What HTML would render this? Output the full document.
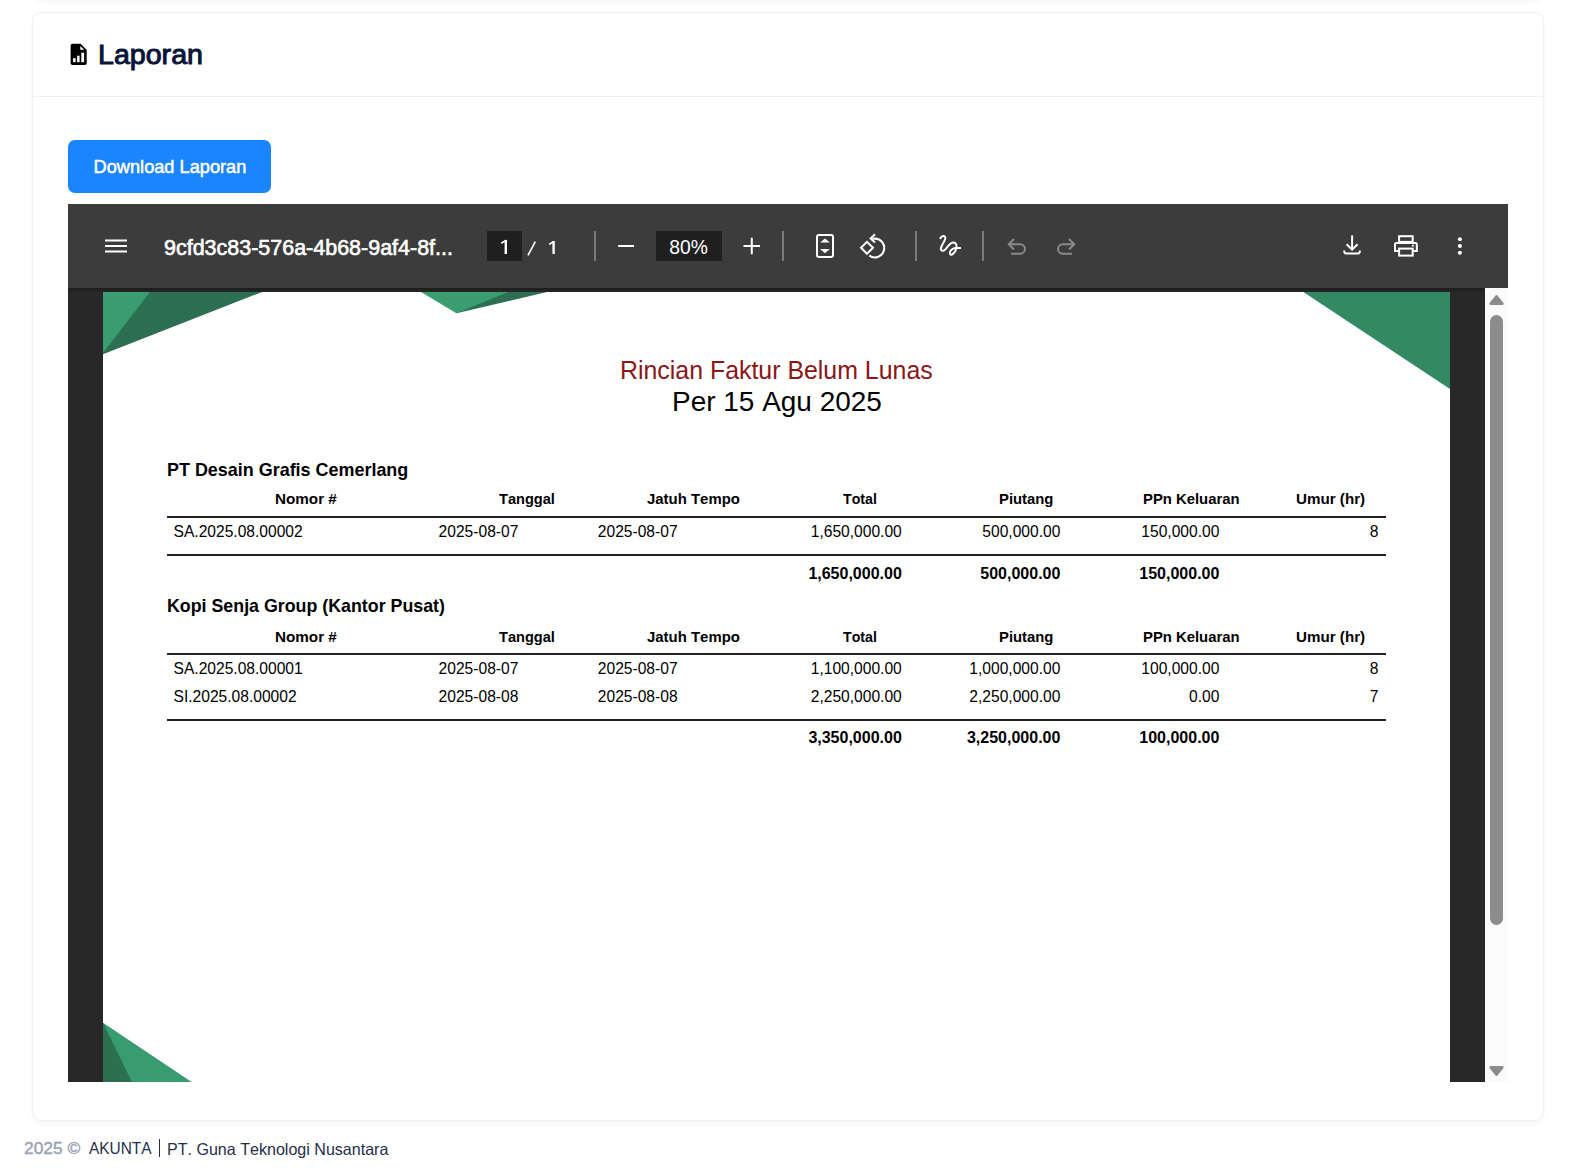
<!DOCTYPE html>
<html><head><meta charset="utf-8"><title>Laporan</title>
<style>
html,body{margin:0;padding:0;width:1589px;height:1175px;overflow:hidden;background:#ffffff;font-family:"Liberation Sans",sans-serif;position:relative}
.t{position:absolute;white-space:pre;line-height:1;font-kerning:none;font-family:"Liberation Sans",sans-serif}
</style></head><body>
<div style="position:absolute;left:34px;top:-60px;width:1508px;height:60px;background:#fff;box-shadow:0 3px 4px rgba(0,0,0,0.03);border-radius:9px"></div>
<div style="position:absolute;left:32px;top:12px;width:1510px;height:1107px;background:#fff;border:1px solid #F1F1F4;border-radius:9px;box-shadow:0 3px 4px rgba(0,0,0,0.03)"></div>
<div style="position:absolute;left:33px;top:96px;width:1510px;height:1px;background:#F1F1F4"></div>
<div class="t" style="left:97.60px;top:40.39px;font-size:28.2px;color:#071437;transform:scaleX(1.0145731658985655);transform-origin:0 0;-webkit-text-stroke:1.0px #071437;">Laporan</div>
<div style="position:absolute;left:68px;top:140px;width:203px;height:53px;background:#1B84FF;border-radius:7px"></div>
<div class="t" style="left:93.60px;top:157.89px;font-size:18.2px;color:#fff;-webkit-text-stroke:0.5px #fff;">Download Laporan</div>
<div style="position:absolute;left:68px;top:204px;width:1440px;height:878px;background:#282828"></div>
<div style="position:absolute;left:1485px;top:288px;width:23px;height:794px;background:#fbfbfb"></div>
<div style="position:absolute;left:103px;top:292px;width:1347px;height:790px;background:#fff"></div>
<div style="position:absolute;left:68px;top:204px;width:1440px;height:84px;background:#3c3c3c"></div>
<div style="position:absolute;left:68px;top:288px;width:1417px;height:4px;background:linear-gradient(#1c1c1c,#262626)"></div>
<div style="position:absolute;left:1490px;top:315px;width:13px;height:610px;background:#8c8c8c;border-radius:6.5px"></div>
<div style="position:absolute;left:487px;top:231px;width:35px;height:30px;background:#1f1f1f"></div>
<div style="position:absolute;left:656px;top:231px;width:66px;height:30px;background:#1f1f1f"></div>
<div style="position:absolute;left:594px;top:231px;width:2px;height:30px;background:#7a7a7a"></div>
<div style="position:absolute;left:782px;top:231px;width:2px;height:30px;background:#7a7a7a"></div>
<div style="position:absolute;left:915px;top:231px;width:2px;height:30px;background:#7a7a7a"></div>
<div style="position:absolute;left:982px;top:231px;width:2px;height:30px;background:#7a7a7a"></div>
<div class="t" style="left:164.10px;top:236.69px;font-size:22.3px;color:#fff;transform:scaleX(0.963283319111524);transform-origin:0 0;-webkit-text-stroke:0.65px #fff;">9cfd3c83-576a-4b68-9af4-8f...</div>
<div class="t" style="left:669.19px;top:238.48px;font-size:19.3px;color:#fff;">80%</div>
<div class="t" style="left:619.80px;top:358.03px;font-size:24.9px;color:#8a1616;transform:scaleX(1.000057760389299);transform-origin:0 0;">Rincian Faktur Belum Lunas</div>
<div class="t" style="left:671.55px;top:387.84px;font-size:27.9px;color:#000;transform:scaleX(1.0023232670861792);transform-origin:0 0;">Per 15 Agu 2025</div>
<div class="t" style="left:167.40px;top:461.94px;font-size:17.9px;font-weight:700;color:#000;transform:scaleX(1.0027373165859967);transform-origin:0 0;">PT Desain Grafis Cemerlang</div>
<div class="t" style="left:167.00px;top:598.43px;font-size:17.8px;font-weight:700;color:#000;transform:scaleX(1.0011143531568243);transform-origin:0 0;">Kopi Senja Group (Kantor Pusat)</div>
<div class="t" style="left:274.60px;top:491.24px;font-size:15.5px;font-weight:700;color:#000;transform:scaleX(0.982975104556204);transform-origin:0 0;">Nomor #</div>
<div class="t" style="left:499.30px;top:491.24px;font-size:15.5px;font-weight:700;color:#000;transform:scaleX(0.9407735197077832);transform-origin:0 0;">Tanggal</div>
<div class="t" style="left:646.50px;top:491.24px;font-size:15.5px;font-weight:700;color:#000;transform:scaleX(0.9631816617054453);transform-origin:0 0;">Jatuh Tempo</div>
<div class="t" style="left:842.90px;top:491.24px;font-size:15.5px;font-weight:700;color:#000;transform:scaleX(0.9156120591881413);transform-origin:0 0;">Total</div>
<div class="t" style="left:998.60px;top:491.24px;font-size:15.5px;font-weight:700;color:#000;transform:scaleX(0.9572272412889479);transform-origin:0 0;">Piutang</div>
<div class="t" style="left:1143.10px;top:491.24px;font-size:15.5px;font-weight:700;color:#000;transform:scaleX(0.9575286582234324);transform-origin:0 0;">PPn Keluaran</div>
<div class="t" style="left:1295.60px;top:491.24px;font-size:15.5px;font-weight:700;color:#000;transform:scaleX(0.9786811157714929);transform-origin:0 0;">Umur (hr)</div>
<div class="t" style="left:274.60px;top:628.53px;font-size:15.5px;font-weight:700;color:#000;transform:scaleX(0.982975104556204);transform-origin:0 0;">Nomor #</div>
<div class="t" style="left:499.30px;top:628.53px;font-size:15.5px;font-weight:700;color:#000;transform:scaleX(0.9407735197077832);transform-origin:0 0;">Tanggal</div>
<div class="t" style="left:646.50px;top:628.53px;font-size:15.5px;font-weight:700;color:#000;transform:scaleX(0.9631816617054453);transform-origin:0 0;">Jatuh Tempo</div>
<div class="t" style="left:842.90px;top:628.53px;font-size:15.5px;font-weight:700;color:#000;transform:scaleX(0.9156120591881413);transform-origin:0 0;">Total</div>
<div class="t" style="left:998.60px;top:628.53px;font-size:15.5px;font-weight:700;color:#000;transform:scaleX(0.9572272412889479);transform-origin:0 0;">Piutang</div>
<div class="t" style="left:1143.10px;top:628.53px;font-size:15.5px;font-weight:700;color:#000;transform:scaleX(0.9575286582234324);transform-origin:0 0;">PPn Keluaran</div>
<div class="t" style="left:1295.60px;top:628.53px;font-size:15.5px;font-weight:700;color:#000;transform:scaleX(0.9786811157714929);transform-origin:0 0;">Umur (hr)</div>
<div style="position:absolute;left:167px;top:516px;width:1219px;height:2px;background:#222"></div>
<div style="position:absolute;left:167px;top:554px;width:1219px;height:2px;background:#222"></div>
<div style="position:absolute;left:167px;top:653px;width:1219px;height:2px;background:#222"></div>
<div style="position:absolute;left:167px;top:719px;width:1219px;height:2px;background:#222"></div>
<div class="t" style="left:173.50px;top:524.05px;font-size:15.6px;color:#000;">SA.2025.08.00002</div>
<div class="t" style="left:438.60px;top:524.05px;font-size:15.6px;color:#000;">2025-08-07</div>
<div class="t" style="left:597.80px;top:524.05px;font-size:15.6px;color:#000;">2025-08-07</div>
<div class="t" style="left:810.71px;top:524.05px;font-size:15.6px;color:#000;">1,650,000.00</div>
<div class="t" style="left:982.32px;top:524.05px;font-size:15.6px;color:#000;">500,000.00</div>
<div class="t" style="left:1141.32px;top:524.05px;font-size:15.6px;color:#000;">150,000.00</div>
<div class="t" style="left:1369.82px;top:524.05px;font-size:15.6px;color:#000;">8</div>
<div class="t" style="left:808.38px;top:565.62px;font-size:16.0px;font-weight:700;color:#000;">1,650,000.00</div>
<div class="t" style="left:980.32px;top:565.62px;font-size:16.0px;font-weight:700;color:#000;">500,000.00</div>
<div class="t" style="left:1139.32px;top:565.62px;font-size:16.0px;font-weight:700;color:#000;">150,000.00</div>
<div class="t" style="left:173.50px;top:661.45px;font-size:15.6px;color:#000;">SA.2025.08.00001</div>
<div class="t" style="left:438.60px;top:661.45px;font-size:15.6px;color:#000;">2025-08-07</div>
<div class="t" style="left:597.80px;top:661.45px;font-size:15.6px;color:#000;">2025-08-07</div>
<div class="t" style="left:810.71px;top:661.45px;font-size:15.6px;color:#000;">1,100,000.00</div>
<div class="t" style="left:969.31px;top:661.45px;font-size:15.6px;color:#000;">1,000,000.00</div>
<div class="t" style="left:1141.32px;top:661.45px;font-size:15.6px;color:#000;">100,000.00</div>
<div class="t" style="left:1369.82px;top:661.45px;font-size:15.6px;color:#000;">8</div>
<div class="t" style="left:173.50px;top:689.15px;font-size:15.6px;color:#000;">SI.2025.08.00002</div>
<div class="t" style="left:438.60px;top:689.15px;font-size:15.6px;color:#000;">2025-08-08</div>
<div class="t" style="left:597.80px;top:689.15px;font-size:15.6px;color:#000;">2025-08-08</div>
<div class="t" style="left:810.71px;top:689.15px;font-size:15.6px;color:#000;">2,250,000.00</div>
<div class="t" style="left:969.31px;top:689.15px;font-size:15.6px;color:#000;">2,250,000.00</div>
<div class="t" style="left:1189.04px;top:689.15px;font-size:15.6px;color:#000;">0.00</div>
<div class="t" style="left:1369.82px;top:689.15px;font-size:15.6px;color:#000;">7</div>
<div class="t" style="left:808.38px;top:729.52px;font-size:16.0px;font-weight:700;color:#000;">3,350,000.00</div>
<div class="t" style="left:966.98px;top:729.52px;font-size:16.0px;font-weight:700;color:#000;">3,250,000.00</div>
<div class="t" style="left:1139.32px;top:729.52px;font-size:16.0px;font-weight:700;color:#000;">100,000.00</div>
<div class="t" style="left:23.60px;top:1140.21px;font-size:16.5px;color:#99A1B7;transform:scaleX(1.0514941394651978);transform-origin:0 0;-webkit-text-stroke:0.4px #99A1B7;">2025 ©</div>
<div class="t" style="left:89.00px;top:1140.45px;font-size:16.2px;color:#252F4A;transform:scaleX(0.9526756402082432);transform-origin:0 0;">AKUNTA</div>
<div style="position:absolute;left:159px;top:1139px;width:1px;height:18px;background:#252F4A"></div>
<div class="t" style="left:167.30px;top:1140.56px;font-size:16.07px;color:#252F4A;transform:scaleX(0.9998760382239575);transform-origin:0 0;">PT. Guna Teknologi Nusantara</div>
<svg width="1589" height="1175" viewBox="0 0 1589 1175" style="position:absolute;left:0;top:0">
<g>
<polygon points="103,292 262,292 103,354.2" fill="#2c6f51"/>
<polygon points="103,292 150,292 103,353" fill="#399d70"/>
<polygon points="440,292 547,292 456.4,313.2" fill="#2c6f51"/>
<polygon points="421,292 508.3,292 456.4,313.2" fill="#399d70"/>
<polygon points="1303.3,292 1450,292 1450,389" fill="#338a62"/>
<polygon points="103,1022.8 191.7,1082 103,1082" fill="#399c6f"/>
<polygon points="103,1023 132,1082 103,1082" fill="#2d7050"/>
</g>
<!-- scroll arrows -->
<polygon points="1496.5,296.6 1502.2,303.6 1490.8,303.6" fill="#8c8c8c" stroke="#8c8c8c" stroke-width="3" stroke-linejoin="round"/>
<polygon points="1490.8,1067.4 1502.2,1067.4 1496.5,1074.4" fill="#8c8c8c" stroke="#8c8c8c" stroke-width="3" stroke-linejoin="round"/>
<!-- hamburger -->
<g fill="#fff"><rect x="105" y="239.5" width="22" height="2"/><rect x="105" y="245" width="22" height="2"/><rect x="105" y="250.5" width="22" height="2"/></g>
<!-- page num -->
<g fill="none" stroke="#fff">
<path d="M505.8,239.9 V254" stroke-width="2.4"/><path d="M501.2,243.3 L505.6,240.6" stroke-width="1.7"/>
<path d="M528,255.4 L535.3,241.6" stroke-width="1.6"/>
<path d="M553.6,241 V254" stroke-width="2.4"/><path d="M549.2,244.4 L553.4,241.8" stroke-width="1.7"/>
</g>
<!-- minus / plus -->
<rect x="618.2" y="245" width="15.8" height="2" fill="#fff"/>
<rect x="743.5" y="245" width="16.5" height="2" fill="#fff"/><rect x="750.75" y="237.75" width="2" height="16.5" fill="#fff"/>
<!-- fit page -->
<rect x="817" y="235" width="16" height="22" rx="2" fill="none" stroke="#fff" stroke-width="2"/>
<polygon points="825,238.5 829.8,242.6 820.2,242.6" fill="#fff"/>
<polygon points="820.2,249 829.8,249 825,253.3" fill="#fff"/>
<!-- rotate -->
<polygon points="861,247.8 867,241.8 873,247.8 867,253.8" fill="none" stroke="#fff" stroke-width="2"/>
<path d="M872.5,238.6 L874.3,238.6 A9.4,9.4 0 1 1 869.3,255.6" fill="none" stroke="#fff" stroke-width="2.1"/>
<path d="M875,234.2 L870.6,238.5 L875,242.6" fill="none" stroke="#fff" stroke-width="2"/>
<!-- annotate -->
<path d="M940.4,238.2 C941.5,236 944.6,235 945.3,237.6 C946,240.2 941.2,245 940.9,248.4 C940.7,251.6 943.6,251.6 946.1,248.6 L948,246.2 C950.2,243.5 953.3,241.6 955.3,243.1 C957.4,244.8 956.6,249 955,251.6 C953.4,254.4 950.4,255.8 949.8,253.5 C949.3,251.2 952.3,248.3 955.2,248 L960.2,247.9" fill="none" stroke="#fff" stroke-width="2" stroke-linecap="round" stroke-linejoin="round"/>
<!-- undo / redo -->
<g fill="none" stroke="#8a8a8a" stroke-width="2">
<path d="M1014,239 L1008.8,244.3 L1014,249.5"/><path d="M1009,244.3 H1020.2 A4.75,4.75 0 0 1 1020.2,253.8 H1011"/>
<path d="M1069,239 L1074.2,244.3 L1069,249.5"/><path d="M1074,244.3 H1062.8 A4.75,4.75 0 0 0 1062.8,253.8 H1072"/>
</g>
<!-- download -->
<g fill="none" stroke="#fff" stroke-width="2">
<path d="M1352.1,235.4 V249.5"/><path d="M1346.6,244.2 L1352.1,249.7 L1357.6,244.2"/>
<path d="M1344.3,250.5 V251.6 Q1344.3,253.6 1346.3,253.6 H1357.8 Q1359.8,253.6 1359.8,251.6 V250.5"/>
</g>
<!-- print -->
<g fill="none" stroke="#fff" stroke-width="2">
<rect x="1399.1" y="236.2" width="13.6" height="5.7"/>
<path d="M1398.5,251.1 H1395 V244 Q1395,242.9 1396.5,242.9 H1415.3 Q1416.8,242.9 1416.8,244 V251.1 H1413.3"/>
<rect x="1399.1" y="248.6" width="13.6" height="7"/>
</g>
<rect x="1412" y="244.7" width="1.8" height="1.8" fill="#fff"/>
<!-- more -->
<g fill="#fff"><circle cx="1459.9" cy="239.2" r="2.05"/><circle cx="1459.9" cy="246" r="2.05"/><circle cx="1459.9" cy="252.7" r="2.05"/></g>
<!-- header icon -->
<path d="M72.6,43.8 H80.6 L86.7,49.9 V63.2 Q86.7,65 84.9,65 H72.4 Q70.6,65 70.6,63.2 V45.8 Q70.6,43.8 72.6,43.8 Z" fill="#000"/>
<polygon points="80.3,46 84.2,49.8 80.3,49.8" fill="#fff"/>
<rect x="73.1" y="58.2" width="2.5" height="4" fill="#fff"/><rect x="77.1" y="55.7" width="2.5" height="6.5" fill="#fff"/><rect x="81.3" y="52.7" width="2.8" height="9.5" fill="#fff"/>
</svg>
</body></html>
